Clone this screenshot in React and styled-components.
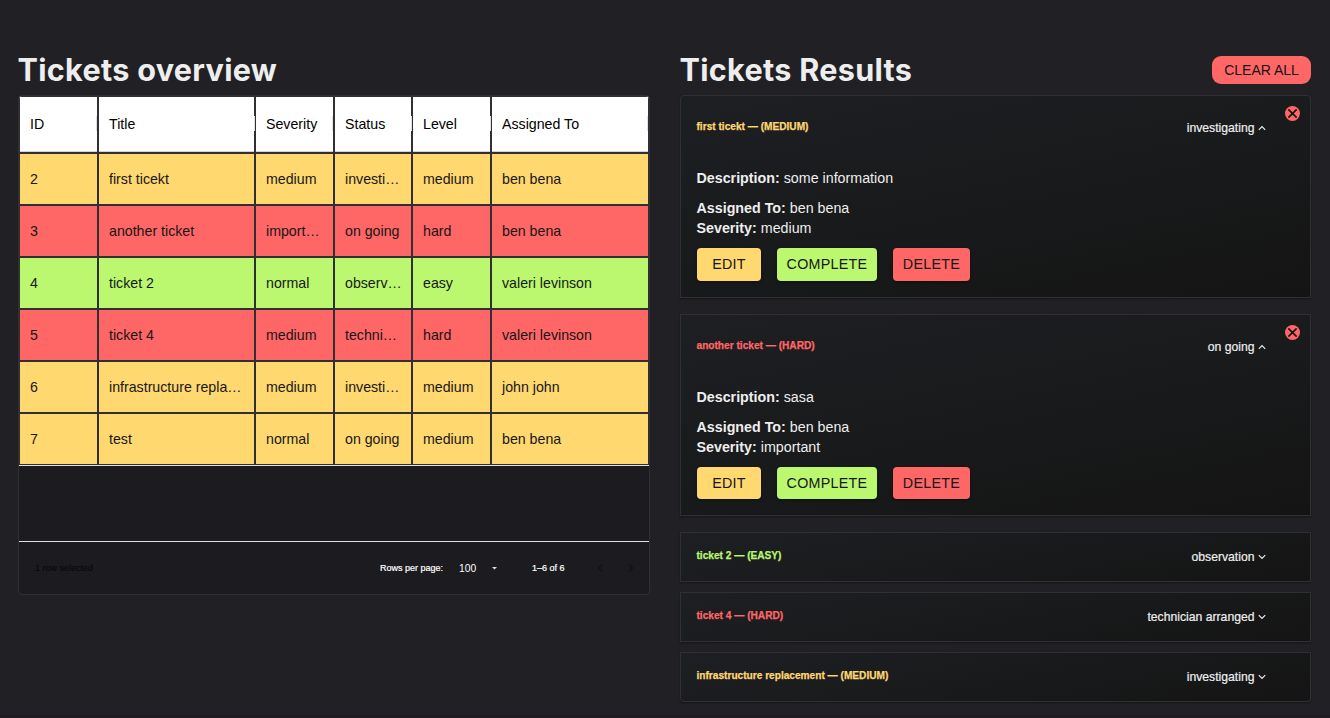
import React from "react";
import styled, { createGlobalStyle } from "styled-components";

const colors = {
  yellow: "#ffd870",
  red: "#ff6666",
  green: "#bbf76f",
  line: "#302f34",
  text: "#eeeeee",
};

const levelColor = { medium: colors.yellow, hard: colors.red, easy: colors.green };

const GlobalStyle = createGlobalStyle`
  * { box-sizing: border-box; }
  body {
    margin: 0;
    background: #212024;
    color: ${colors.text};
    font-family: "Liberation Sans", Arial, sans-serif;
    overflow: hidden;
  }
`;

const Page = styled.main`
  display: grid;
  grid-template-columns: 632px 631px;
  column-gap: 30px;
  align-items: start;
  height: 718px;
  padding: 49px 0 0 18px;
  border-bottom: 3px solid #1f1a22;
`;

const Column = styled.section`
  display: flex;
  flex-direction: column;
`;

const Heading = styled.header`
  display: flex;
  justify-content: space-between;
  height: 46px;
`;

const Title = styled.h1`
  margin: 0 0 0 -0.6px;
  font: 700 30.6px/42px Inter, sans-serif;
  letter-spacing: 0.3px;
  white-space: nowrap;
`;

const ClearButton = styled.button`
  width: 99px;
  height: 28px;
  margin-top: 7px;
  padding: 0;
  border: 0;
  border-radius: 9px;
  background: ${colors.red};
  color: #151515;
  font: 14px/28px "Liberation Sans", Arial, sans-serif;
`;

const Grid = styled.div`
  height: 500px;
  border: 1px solid ${colors.line};
  border-radius: 4px;
  background: #1c1b1f;
  overflow: hidden;
`;

const Row = styled.div`
  display: grid;
  grid-template-columns: 79px 157px 79px 78px 79px 158px;
  height: 52px;
  background: ${(p) => p.$color};
`;

const HeadRow = styled(Row)`
  height: 57px;
  background: #fff;
`;

const Cell = styled.div`
  padding: 0 8px 0 10px;
  border: 1px solid ${colors.line};
  color: #171717;
  font-size: 14.2px;
  line-height: 51px;
  white-space: nowrap;
  overflow: hidden;
  text-overflow: ellipsis;
`;

const HeadCell = styled(Cell)`
  display: flex;
  align-items: center;
  justify-content: space-between;
  padding: 0 0 2px 10px;
  color: #000;
  line-height: 20px;
  overflow: visible;
  box-shadow: inset 0 -1px #d2d2d3;

  &::after {
    content: "";
    width: 1px;
    height: 15px;
    margin-right: ${(p) => (p.$overlap ? "-1px" : "0")};
    background: #e0e0e0;
  }
`;

const EmptyRows = styled.div`
  height: 77px;
  border-top: 1px solid #e0e0e0;
  border-bottom: 1px solid #e0e0e0;
`;

const Footer = styled.footer`
  display: flex;
  align-items: center;
  height: 52px;
  padding: 0 15px 0 16px;
  font-size: 9px;
  color: #fff;
`;

const Selected = styled.span`
  flex: 1;
  color: #060606;
`;

const PageLabel = styled.span`
  width: 79px;
  -webkit-text-stroke: 0.2px;
`;

const PageSize = styled.span`
  width: 33px;
  font-size: 10.3px;
`;

const Range = styled.span`
  width: 65px;
  margin-left: 35px;
  -webkit-text-stroke: 0.2px;
`;

const PagerIcon = styled.svg`
  width: 6px;
  height: 8px;
  margin-right: ${(p) => p.$gap || "0"};
  fill: none;
  stroke: #111113;
  stroke-width: 1.3;
`;

const SelectArrow = styled.svg`
  width: 5px;
  height: 3px;
  fill: #ddd;
`;

const Card = styled.article`
  position: relative;
  height: ${(p) => (p.$open ? 202.5 : 50)}px;
  margin-bottom: ${(p) => (p.$open ? 16 : 10)}px;
  padding: 0 16px 0 15.5px;
  border: 1px solid ${colors.line};
  background: linear-gradient(168deg, #1e1f23 0%, #18191a 60%, #141414 100%);
  box-shadow: 0 1px 2px rgba(0, 0, 0, 0.35);

  &:first-of-type { border-radius: 4px 4px 0 0; }
  &:last-of-type { border-radius: 0 0 4px 4px; }
`;

const Summary = styled.div`
  display: flex;
  justify-content: space-between;
  padding: ${(p) => (p.$open ? "24px 28px 0 0" : "16px 28px 0 0")};
`;

const TicketName = styled.h2`
  margin: 0;
  color: ${(p) => p.$color};
  font-size: 10.15px;
  line-height: 14px;
  font-weight: 700;
  -webkit-text-stroke: 0.25px;
`;

const Status = styled.div`
  display: flex;
  align-items: center;
  gap: 3.5px;
  height: 16px;
  font-size: 12.2px;
  line-height: 16px;
  -webkit-text-stroke: 0.2px;
`;

const Chevron = styled.svg`
  width: 8px;
  height: 6px;
  fill: none;
  stroke: ${colors.text};
  stroke-width: 1.2;
  transform: ${(p) => (p.$up ? "rotate(180deg)" : "none")};
`;

const CloseButton = styled.button`
  position: absolute;
  top: 10px;
  right: 10px;
  display: grid;
  place-items: center;
  width: 15px;
  height: 15px;
  padding: 0;
  border: 0;
  border-radius: 50%;
  background: ${colors.red};

  svg {
    width: 9px;
    height: 9px;
    stroke: #111;
    stroke-width: 1.6;
  }
`;

const Details = styled.div`
  padding-top: 32px;
  font-size: 14.27px;
  line-height: 20px;
`;

const Field = styled.p`
  margin: 0 0 ${(p) => p.$gap || "0"};
`;

const Actions = styled.div`
  display: flex;
  gap: 16px;
  padding: 10px 0 0 0.5px;
`;

const Action = styled.button`
  width: ${(p) => p.$width}px;
  height: 32.5px;
  padding: 0;
  border: 0;
  border-radius: 4px;
  background: ${(p) => p.$color};
  color: #171717;
  font: 14.3px/32.5px "Liberation Sans", Arial, sans-serif;
  letter-spacing: 0.28px;
  box-shadow: 0 1px 3px rgba(0, 0, 0, 0.4);
`;

const columns = ["ID", "Title", "Severity", "Status", "Level", "Assigned To"];
const overlapping = ["Title", "Status", "Level"];

const rows = [
  [2, "first ticekt", "medium", "investigating", "medium", "ben bena"],
  [3, "another ticket", "important", "on going", "hard", "ben bena"],
  [4, "ticket 2", "normal", "observation", "easy", "valeri levinson"],
  [5, "ticket 4", "medium", "technician arranged", "hard", "valeri levinson"],
  [6, "infrastructure replacement", "medium", "investigating", "medium", "john john"],
  [7, "test", "normal", "on going", "medium", "ben bena"],
];

const tickets = [
  { name: "first ticekt", level: "medium", status: "investigating", open: true, description: "some information", assigned: "ben bena", severity: "medium" },
  { name: "another ticket", level: "hard", status: "on going", open: true, description: "sasa", assigned: "ben bena", severity: "important" },
  { name: "ticket 2", level: "easy", status: "observation" },
  { name: "ticket 4", level: "hard", status: "technician arranged" },
  { name: "infrastructure replacement", level: "medium", status: "investigating" },
];

function Ticket({ ticket }) {
  const { name, level, status, open } = ticket;
  return (
    <Card $open={open}>
      <Summary $open={open}>
        <TicketName $color={levelColor[level]}>{`${name} — (${level.toUpperCase()})`}</TicketName>
        <Status>
          {status}
          <Chevron viewBox="0 0 8 6" $up={open}><path d="M.8 1.2 4 4.4 7.2 1.2" /></Chevron>
        </Status>
      </Summary>
      {open && (
        <>
          <CloseButton aria-label="Remove">
            <svg viewBox="0 0 9 9"><path d="M.4.4 8.6 8.6M8.6.4.4 8.6" /></svg>
          </CloseButton>
          <Details>
            <Field $gap="10px"><b>Description:</b> {ticket.description}</Field>
            <Field><b>Assigned To:</b> {ticket.assigned}</Field>
            <Field><b>Severity:</b> {ticket.severity}</Field>
          </Details>
          <Actions>
            <Action $width={64} $color={colors.yellow}>EDIT</Action>
            <Action $width={100} $color={colors.green}>COMPLETE</Action>
            <Action $width={77} $color={colors.red}>DELETE</Action>
          </Actions>
        </>
      )}
    </Card>
  );
}

export default function App() {
  return (
    <>
      <GlobalStyle />
      <Page>
        <Column>
          <Heading><Title>Tickets overview</Title></Heading>
          <Grid>
            <HeadRow>
              {columns.map((c) => <HeadCell key={c} $overlap={overlapping.includes(c)}>{c}</HeadCell>)}
            </HeadRow>
            {rows.map((r) => (
              <Row key={r[0]} $color={levelColor[r[4]]}>
                {r.map((value, i) => <Cell key={i}>{value}</Cell>)}
              </Row>
            ))}
            <EmptyRows />
            <Footer>
              <Selected>1 row selected</Selected>
              <PageLabel>Rows per page:</PageLabel>
              <PageSize>100</PageSize>
              <SelectArrow viewBox="0 0 5 3"><path d="M0 0h5L2.5 2.5z" /></SelectArrow>
              <Range>1–6 of 6</Range>
              <PagerIcon viewBox="0 0 6 8" $gap="25px"><path d="M4.8.8 1.5 4l3.3 3.2" /></PagerIcon>
              <PagerIcon viewBox="0 0 6 8"><path d="M1.2.8 4.5 4 1.2 7.2" /></PagerIcon>
            </Footer>
          </Grid>
        </Column>
        <Column>
          <Heading>
            <Title>Tickets Results</Title>
            <ClearButton>CLEAR ALL</ClearButton>
          </Heading>
          {tickets.map((t) => <Ticket key={t.name} ticket={t} />)}
        </Column>
      </Page>
    </>
  );
}
